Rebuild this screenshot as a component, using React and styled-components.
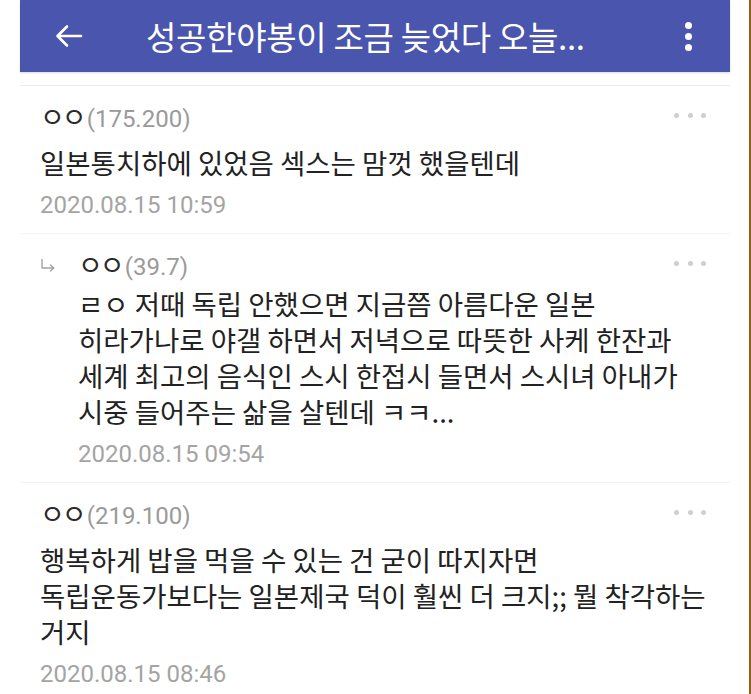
import React from 'react';
import styled, { createGlobalStyle } from 'styled-components';

const GlobalStyle = createGlobalStyle`
	html, body {
		margin: 0;
		padding: 0;
		background: #ffffff;
	}
	* {
		box-sizing: border-box;
	}
`;

const comments = [
	{
		name: 'ㅇㅇ',
		ip: '(175.200)',
		lines: ['일본통치하에 있었음 섹스는 맘껏 했을텐데'],
		date: '2020.08.15 10:59',
	},
	{
		name: 'ㅇㅇ',
		ip: '(39.7)',
		reply: true,
		lines: [
			'ㄹㅇ 저때 독립 안했으면 지금쯤 아름다운 일본',
			'히라가나로 야갤 하면서 저녁으로 따뜻한 사케 한잔과',
			'세계 최고의 음식인 스시 한접시 들면서 스시녀 아내가',
			'시중 들어주는 삶을 살텐데 ㅋㅋ...',
		],
		date: '2020.08.15 09:54',
	},
	{
		name: 'ㅇㅇ',
		ip: '(219.100)',
		lines: [
			'행복하게 밥을 먹을 수 있는 건 굳이 따지자면',
			'독립운동가보다는 일본제국 덕이 훨씬 더 크지;; 뭘 착각하는',
			'거지',
		],
		date: '2020.08.15 08:46',
	},
];

const App = () => {
	return (
		<Page>
			<GlobalStyle />
			<Column>
				<Header>
					<BackButton aria-label="back">
						<svg width="28" height="24" viewBox="0 0 28 24" fill="none">
							<path d="M26 12H3M12 2.5L2.5 12L12 21.5" stroke="#fff" strokeWidth="2.6" strokeLinecap="round" strokeLinejoin="round" />
						</svg>
					</BackButton>
					<Title>성공한야봉이 조금 늦었다 오늘...</Title>
					<MenuButton aria-label="menu">
						<span />
						<span />
						<span />
					</MenuButton>
				</Header>
				<Divider />
				{comments.map((c, i) => (
					<Comment key={i}>
						<MetaRow>
							{c.reply && (
								<ReplyMark>
									<svg width="16" height="14" viewBox="0 0 16 14" fill="none">
										<path d="M2 1.5V10H13.5M10.5 7L13.8 10L10.5 13" stroke="#a3a3a3" strokeWidth="1.4" strokeLinecap="round" strokeLinejoin="round" />
									</svg>
								</ReplyMark>
							)}
							<Name>
								<Nick>{c.name}</Nick>
								<Ip>{c.ip}</Ip>
							</Name>
							<More>
								<i />
								<i />
								<i />
							</More>
						</MetaRow>
						<Body $reply={c.reply}>
							{c.lines.map((l, j) => (
								<Line key={j}>{l}</Line>
							))}
						</Body>
						<Date $reply={c.reply}>{c.date}</Date>
					</Comment>
				))}
			</Column>
		</Page>
	);
};

const Page = styled.div`
	width: 751px;
	min-height: 100vh;
	border-right: 2px solid #8e6114;
	padding-left: 20px;
	font-family: Roboto, "Noto Sans CJK KR", sans-serif;
	overflow: hidden;
`;

const Column = styled.div`
	width: 710px;
`;

const Header = styled.div`
	height: 72px;
	background: #4a55ae;
	display: flex;
	align-items: center;
	box-shadow: 0 1px 2px rgba(0, 0, 0, 0.15);
`;

const BackButton = styled.div`
	display: flex;
	align-items: center;
	margin-left: 35px;
	width: 28px;
	height: 24px;
`;

const Title = styled.h1`
	margin: 0 0 0 63px;
	flex: 1;
	color: #ffffff;
	font-family: "Noto Sans CJK KR", sans-serif;
	font-size: 33px;
	font-weight: 400;
	line-height: 40px;
	letter-spacing: -0.3px;
	white-space: nowrap;
`;

const MenuButton = styled.div`
	display: flex;
	flex-direction: column;
	align-items: center;
	gap: 4px;
	margin-right: 38px;
	span {
		width: 7px;
		height: 7px;
		border-radius: 50%;
		background: #ffffff;
	}
`;

const Divider = styled.div`
	height: 1px;
	margin-top: 13px;
	background: #ececec;
`;

const Comment = styled.div`
	padding: 11px 0 10px 20px;
	border-bottom: 1px solid #f4f4f4;
`;

const MetaRow = styled.div`
	display: flex;
	align-items: center;
	height: 36px;
`;

const ReplyMark = styled.span`
	display: flex;
	width: 38px;
	padding-top: 4px;
`;

const Name = styled.div`
	flex: 1;
	font-size: 24px;
	white-space: nowrap;
`;

const Nick = styled.span`
	font-size: 27px;
	color: #2a2a2a;
	letter-spacing: -3px;
	margin-right: 3px;
`;

const Ip = styled.span`
	color: #9a9a9a;
`;

const More = styled.div`
	display: flex;
	gap: 8.5px;
	margin-right: 24px;
	i {
		width: 5px;
		height: 5px;
		border-radius: 50%;
		background: #cfcfcf;
	}
`;

const Body = styled.div`
	margin-top: ${(p) => (p.$reply ? '4px' : '11px')};
	padding-left: ${(p) => (p.$reply ? '38px' : '0')};
	font-family: "Noto Sans CJK KR", sans-serif;
	font-size: 27.5px;
	color: #222222;
	white-space: nowrap;
`;

const Line = styled.div`
	height: 36px;
	line-height: 36px;
`;

const Date = styled.div`
	margin-top: ${(p) => (p.$reply ? '7px' : '7px')};
	padding-left: ${(p) => (p.$reply ? '38px' : '0')};
	font-size: 24px;
	line-height: 36px;
	color: #a4a4a4;
`;

export default App;
